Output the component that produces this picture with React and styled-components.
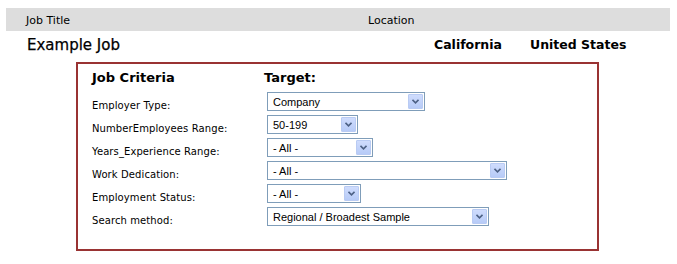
import React from 'react';
import styled, { createGlobalStyle } from 'styled-components';

const GlobalStyle = createGlobalStyle`
  body {
    margin: 0;
    background: #ffffff;
    font-family: 'DejaVu Sans', Verdana, sans-serif;
    color: #000;
  }
`;

const Page = styled.div`
  padding: 8px 7px 0 6px;
`;

const HeaderBar = styled.div`
  display: grid;
  grid-template-columns: 342px 1fr;
  height: 23px;
  align-items: center;
  padding-left: 20px;
  background: #dddddd;
  font-size: 11px;
  line-height: 13px;
  padding-top: 1px;
  box-sizing: border-box;
`;

const JobRow = styled.div`
  display: grid;
  grid-template-columns: 1fr 96px 140px;
  align-items: center;
  height: 27px;
  padding-left: 21px;
`;

const JobName = styled.div`
  font-size: 15px;
  -webkit-text-stroke: 0.25px #000;
`;

const Place = styled.div`
  font-size: 12.5px;
  font-weight: bold;
`;

const CriteriaBox = styled.div`
  width: 519px;
  height: 185px;
  margin: 4px 0 0 70px;
  border: 2px solid #993333;
`;

const Table = styled.table`
  border-collapse: collapse;
  margin-left: 14px;
`;

const HeadCell = styled.th`
  height: 26px;
  padding: 6px 0 0 0;
  box-sizing: border-box;
  text-align: left;
  vertical-align: top;
  font-size: 13px;
  font-weight: bold;
  line-height: 16px;
  width: ${({ $w }) => $w || 'auto'};
`;

const Row = styled.tr`
  height: 23px;
`;

const Label = styled.td`
  padding: 7px 0 0 0;
  font-size: 10px;
  letter-spacing: 0.1px;
  vertical-align: middle;
`;

const Cell = styled.td`
  padding: 0 0 0 3px;
  vertical-align: middle;
`;

const SelectBox = styled.div`
  display: flex;
  align-items: center;
  box-sizing: border-box;
  width: ${({ $w }) => $w}px;
  height: 19px;
  border: 1px solid #7f9db9;
  background: #fff;
  font-family: 'Liberation Sans', Arial, sans-serif;
  font-size: 11px;
`;

const SelectText = styled.span`
  flex: 1;
  padding-left: 5px;
  white-space: nowrap;
  overflow: hidden;
`;

const ArrowButton = styled.span`
  display: flex;
  align-items: center;
  justify-content: center;
  box-sizing: border-box;
  width: 15px;
  height: 15px;
  margin-right: 1px;
  border: 1px solid #b9cbf3;
  border-radius: 1px;
  background: linear-gradient(#cfdcfd, #b7cbf7);
`;

function Chevron() {
  return (
    <svg width="7" height="5" viewBox="0 0 7 5">
      <path d="M0.5 0.8 L3.5 3.8 L6.5 0.8" fill="none" stroke="#4d6185" strokeWidth="1.6" />
    </svg>
  );
}

function Select({ value, width }) {
  return (
    <SelectBox $w={width}>
      <SelectText>{value}</SelectText>
      <ArrowButton>
        <Chevron />
      </ArrowButton>
    </SelectBox>
  );
}

const criteria = [
  { label: 'Employer Type:', value: 'Company', width: 158 },
  { label: 'NumberEmployees Range:', value: '50-199', width: 91 },
  { label: 'Years_Experience Range:', value: '- All -', width: 106 },
  { label: 'Work Dedication:', value: '- All -', width: 240 },
  { label: 'Employment Status:', value: '- All -', width: 94 },
  { label: 'Search method:', value: 'Regional / Broadest Sample', width: 222 },
];

export default function App() {
  return (
    <Page>
      <GlobalStyle />
      <HeaderBar>
        <span>Job Title</span>
        <span>Location</span>
      </HeaderBar>
      <JobRow>
        <JobName>Example Job</JobName>
        <Place>California</Place>
        <Place>United States</Place>
      </JobRow>
      <CriteriaBox>
        <Table>
          <thead>
            <tr>
              <HeadCell $w="172px">Job Criteria</HeadCell>
              <HeadCell>Target:</HeadCell>
            </tr>
          </thead>
          <tbody>
            {criteria.map((c) => (
              <Row key={c.label}>
                <Label>{c.label}</Label>
                <Cell>
                  <Select value={c.value} width={c.width} />
                </Cell>
              </Row>
            ))}
          </tbody>
        </Table>
      </CriteriaBox>
    </Page>
  );
}
